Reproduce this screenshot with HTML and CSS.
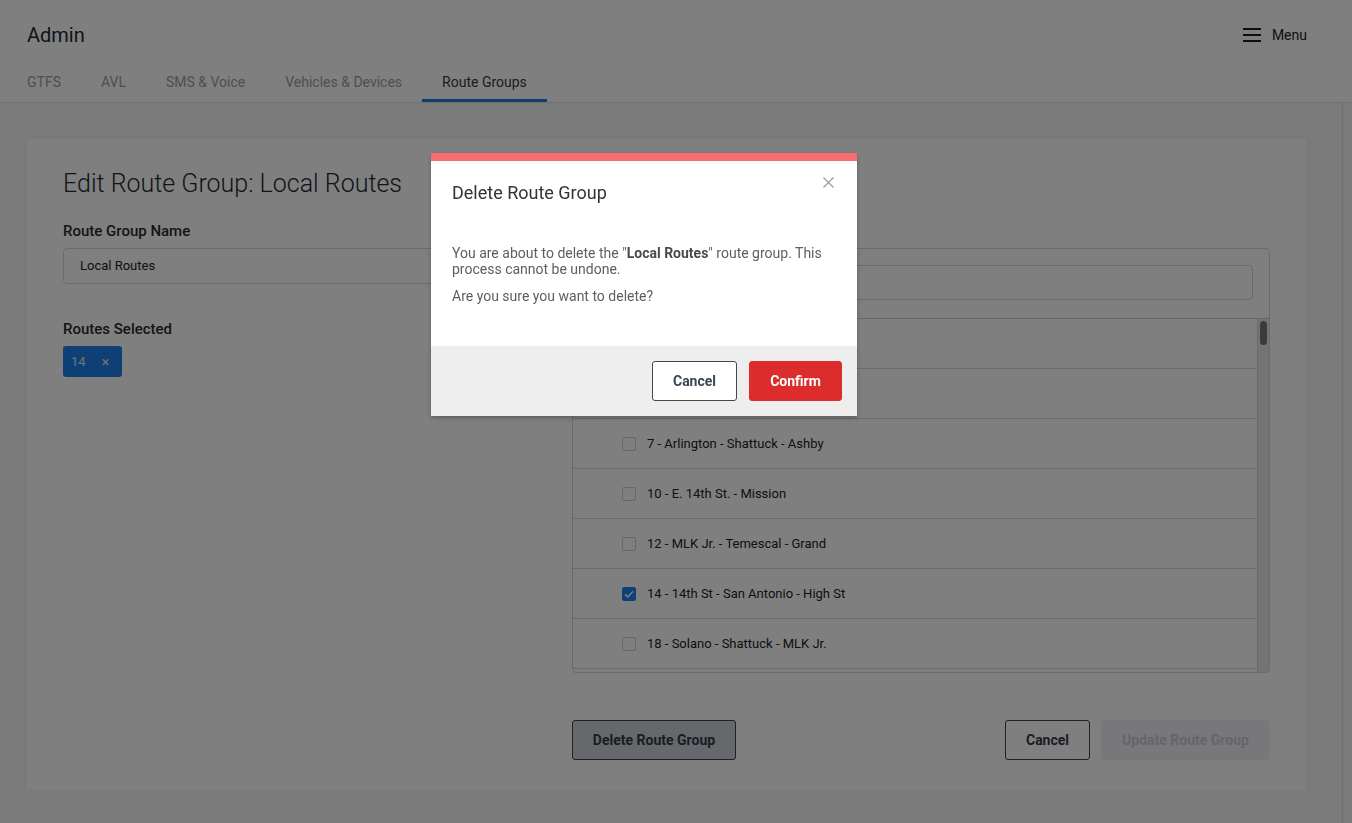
FILE: index.html
```html
<!DOCTYPE html>
<html lang="en">
<head>
<meta charset="utf-8">
<title>Admin - Route Groups</title>
<link rel="stylesheet" href="styles.css">
</head>
<body>
<div class="app">
  <header class="topbar">
    <div class="topbar-row">
      <div class="brand">Admin</div>
      <button class="menu-btn" type="button">
        <svg class="menu-icon" width="18" height="14" viewBox="0 0 18 14" aria-hidden="true">
          <rect x="0" y="0" width="18" height="2"/>
          <rect x="0" y="6" width="18" height="2"/>
          <rect x="0" y="12" width="18" height="2"/>
        </svg>
        <span>Menu</span>
      </button>
    </div>
    <nav class="tabs">
      <a class="tab">GTFS</a>
      <a class="tab">AVL</a>
      <a class="tab">SMS &amp; Voice</a>
      <a class="tab">Vehicles &amp; Devices</a>
      <a class="tab active">Route Groups</a>
    </nav>
  </header>

  <div class="body-row">
    <main class="main">
      <section class="card">
        <h1 class="card-title">Edit Route Group: Local Routes</h1>
        <div class="form-grid">
          <div class="col-left">
            <label class="field-label">Route Group Name</label>
            <div class="text-input">Local Routes</div>
            <label class="field-label second">Routes Selected</label>
            <div class="chips">
              <span class="chip"><span class="chip-text">14</span><span class="chip-x">×</span></span>
            </div>
          </div>
          <div class="col-right">
            <label class="field-label">Routes</label>
            <div class="route-box">
              <div class="route-search">
                <div class="search-input"></div>
              </div>
              <div class="route-list">
                <div class="rows">
                  <div class="row"><span class="cb"></span><span class="row-text">1 - Broadway</span></div>
                  <div class="row"><span class="cb"></span><span class="row-text">6 - Telegraph</span></div>
                  <div class="row"><span class="cb"></span><span class="row-text">7 - Arlington - Shattuck - Ashby</span></div>
                  <div class="row"><span class="cb"></span><span class="row-text">10 - E. 14th St. - Mission</span></div>
                  <div class="row"><span class="cb"></span><span class="row-text">12 - MLK Jr. - Temescal - Grand</span></div>
                  <div class="row"><span class="cb checked"><svg width="10" height="8" viewBox="0 0 10 8" aria-hidden="true"><path d="M1 4.2 L3.8 7 L9 1.2" fill="none" stroke="#fff" stroke-width="1.4"/></svg></span><span class="row-text">14 - 14th St - San Antonio - High St</span></div>
                  <div class="row"><span class="cb"></span><span class="row-text">18 - Solano - Shattuck - MLK Jr.</span></div>
                </div>
                <div class="list-scroll"><div class="list-thumb"></div></div>
              </div>
            </div>
            <div class="actions">
              <button class="btn btn-gray" type="button">Delete Route Group</button>
              <div class="actions-right">
                <button class="btn btn-outline" type="button">Cancel</button>
                <button class="btn btn-disabled" type="button">Update Route Group</button>
              </div>
            </div>
          </div>
        </div>
      </section>
    </main>
    <div class="page-scroll"></div>
  </div>
</div>

<div class="overlay"></div>

<div class="modal" role="dialog">
  <div class="modal-bar"></div>
  <button class="modal-close" type="button" aria-label="Close">
    <svg width="11" height="11" viewBox="0 0 11 11" aria-hidden="true"><path d="M0.5 0.5 L10.5 10.5 M10.5 0.5 L0.5 10.5" stroke="#9a9a9a" stroke-width="1.1" fill="none"/></svg>
  </button>
  <div class="modal-head">
    <h2 class="modal-title">Delete Route Group</h2>
  </div>
  <div class="modal-body">
    <p>You are about to delete the "<b>Local Routes</b>" route group. This process cannot be undone.</p>
    <p>Are you sure you want to delete?</p>
  </div>
  <div class="modal-foot">
    <button class="mbtn mbtn-cancel" type="button">Cancel</button>
    <button class="mbtn mbtn-confirm" type="button">Confirm</button>
  </div>
</div>
</body>
</html>
```

FILE: styles.css
```css
* { box-sizing: border-box; }

html, body {
  margin: 0;
  padding: 0;
  width: 1352px;
  height: 823px;
  overflow: hidden;
  font-family: Roboto, "Liberation Sans", Arial, sans-serif;
  color: #222;
  background: #f4f4f4;
}

button { font-family: inherit; cursor: pointer; }

.app {
  display: flex;
  flex-direction: column;
  height: 823px;
}

/* Header */
.topbar {
  background: #fffffe;
  height: 102px;
  flex: 0 0 102px;
  box-shadow: 0 1px 1px rgba(0,0,0,0.06);
  position: relative;
  z-index: 1;
}
.topbar-row {
  display: flex;
  align-items: center;
  justify-content: space-between;
  padding: 24px 45px 16px 27px;
  height: 62px;
}
.brand {
  font-size: 20px;
  line-height: 22px;
  color: #1c2a33;
  font-weight: 400;
}
.menu-btn {
  display: flex;
  align-items: center;
  gap: 11px;
  background: none;
  border: 0;
  padding: 0;
  font-size: 14px;
  color: #222;
  line-height: 22px;
}
.menu-icon { fill: #1f1f1f; }

.tabs {
  display: flex;
  padding-left: 7px;
  height: 40px;
}
.tab {
  padding: 4px 20px 0;
  line-height: 33px;
  font-size: 14px;
  color: #9b9e9f;
  border-bottom: 3px solid transparent;
}
.tab.active {
  color: #3a3a3a;
  border-bottom-color: #1f7ae0;
}

/* Body */
.body-row {
  flex: 1;
  display: flex;
  min-height: 0;
}
.main {
  flex: 1;
  padding: 37px 36px 0 27px;
}
.page-scroll {
  flex: 0 0 10px;
  border-left: 1px solid #dcdcdc;
  background: #f4f4f4;
}

.card {
  background: #fffffe;
  padding: 31px 36px 30px;
}
.card-title {
  margin: 0 0 23px;
  font-size: 25px;
  line-height: 28px;
  font-weight: 300;
  color: #1f2b32;
}

.form-grid {
  display: grid;
  grid-template-columns: 473px 698px;
  column-gap: 36px;
}

.field-label {
  display: block;
  font-size: 15px;
  line-height: 20px;
  font-weight: 500;
  color: #2a2a2a;
  margin-bottom: 7px;
}
.field-label.second { margin-top: 35px; }

.text-input {
  height: 36px;
  border: 1px solid #d9d9d9;
  border-radius: 4px;
  padding: 0 16px;
  font-size: 13px;
  line-height: 34px;
  color: #222;
}

.chips { display: flex; }
.chip {
  display: inline-flex;
  align-items: center;
  height: 31px;
  padding: 0 13px 0 8px;
  background: #1d80ea;
  border-radius: 3px;
  color: #fff;
  font-size: 13px;
}
.chip-text { color: rgba(255,255,255,0.85); }
.chip-x {
  margin-left: 16px;
  font-size: 14px;
  color: rgba(255,255,255,0.85);
}

/* Right column */
.route-box {
  border: 1px solid #d7d7dc;
  border-radius: 4px;
  display: flex;
  flex-direction: column;
}
.route-search {
  padding: 16px 16px 18px;
  border-bottom: 1px solid #d0d0d6;
}
.search-input {
  height: 35px;
  border: 1px solid #d6d6dc;
  border-radius: 4px;
}
.route-list {
  height: 353px;
  display: flex;
  overflow: hidden;
}
.rows {
  flex: 1;
  overflow: hidden;
}
.row {
  height: 50px;
  border-bottom: 1px solid #d6d6dc;
  display: flex;
  align-items: center;
  padding-left: 49px;
  font-size: 13px;
  color: #222;
}
.cb {
  width: 14px;
  height: 14px;
  border: 1px solid #cfcfcf;
  border-radius: 2px;
  margin-right: 11px;
  display: inline-flex;
  align-items: center;
  justify-content: center;
  background: #fff;
}
.cb.checked {
  background: #1e83ee;
  border-color: #1e83ee;
}
.list-scroll {
  flex: 0 0 12px;
  background: #e8e8e8;
  border-left: 1px solid #d4d4d4;
  padding: 2px 2px 0 2px;
}
.list-thumb {
  width: 7px;
  height: 24px;
  border-radius: 4px;
  background: #777;
}

.actions {
  margin-top: 47px;
  display: flex;
  justify-content: space-between;
}
.actions-right {
  display: flex;
  gap: 11px;
}
.btn {
  height: 40px;
  border-radius: 3px;
  font-size: 14px;
  font-weight: 700;
  padding: 0;
}
.btn-gray {
  width: 164px;
  background: #cdd0d8;
  border: 1px solid #3c4250;
  color: #333a47;
}
.btn-outline {
  width: 85px;
  background: #fff;
  border: 1px solid #3c4250;
  color: #333a47;
}
.btn-disabled {
  width: 169px;
  background: #f0f1f5;
  border: 1px solid #f0f1f5;
  color: #c9ccd3;
}

/* Overlay + modal */
.overlay {
  position: fixed;
  inset: 0;
  background: rgba(0,0,0,0.5);
  z-index: 10;
}
.modal {
  position: absolute;
  left: 431px;
  top: 153px;
  width: 426px;
  background: #fff;
  z-index: 11;
  box-shadow: 0 2px 4px rgba(0,0,0,0.25);
}
.modal-bar {
  height: 8px;
  background: #f76d6d;
}
.modal-close {
  position: absolute;
  top: 24px;
  right: 23px;
  width: 11px;
  height: 11px;
  padding: 0;
  border: 0;
  background: none;
  display: block;
}
.modal-close svg { display: block; }
.modal-head {
  padding: 21px 21px 0;
}
.modal-title {
  margin: 0;
  font-size: 18px;
  line-height: 22px;
  font-weight: 400;
  color: #333;
}
.modal-body {
  padding: 41px 21px 31px;
  font-size: 14px;
  line-height: 16px;
  color: #5e5e5e;
}
.modal-body p { margin: 0 0 11px; }
.modal-body b { color: #4a4a4a; font-weight: 700; }
.modal-foot {
  background: #eeeeee;
  height: 70px;
  padding: 15px;
  display: flex;
  justify-content: flex-end;
  gap: 12px;
}
.mbtn {
  height: 40px;
  border-radius: 3px;
  font-size: 14px;
  font-weight: 700;
  padding: 0;
}
.mbtn-cancel {
  width: 85px;
  background: #fff;
  border: 1px solid #3f4858;
  color: #3d4656;
}
.mbtn-confirm {
  width: 93px;
  background: #dd2c2c;
  border: 1px solid #dd2c2c;
  color: #fff;
}
```
